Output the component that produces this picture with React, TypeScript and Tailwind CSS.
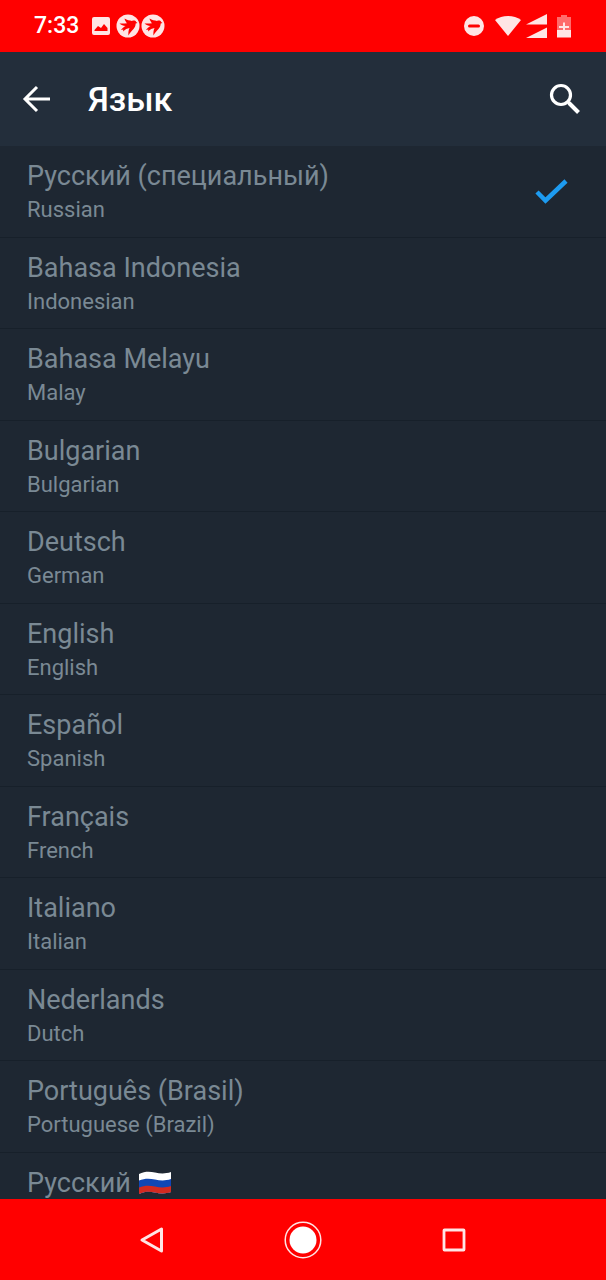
import React, { useState } from 'react';

const languages = [
  { id: 'ru-custom', name: 'Русский (специальный)', english: 'Russian' },
  { id: 'id', name: 'Bahasa Indonesia', english: 'Indonesian' },
  { id: 'ms', name: 'Bahasa Melayu', english: 'Malay' },
  { id: 'bg', name: 'Bulgarian', english: 'Bulgarian' },
  { id: 'de', name: 'Deutsch', english: 'German' },
  { id: 'en', name: 'English', english: 'English' },
  { id: 'es', name: 'Español', english: 'Spanish' },
  { id: 'fr', name: 'Français', english: 'French' },
  { id: 'it', name: 'Italiano', english: 'Italian' },
  { id: 'nl', name: 'Nederlands', english: 'Dutch' },
  { id: 'pt-br', name: 'Português (Brasil)', english: 'Portuguese (Brazil)' },
  { id: 'ru', name: 'Русский', english: 'Russian', flag: true },
];

const RussianFlag = () => (
  <svg className="h-6 w-8" viewBox="0 0 32 24" role="img" aria-label="Russia">
    <clipPath id="flag-wave">
      <path d="M0 3C6 0 11 .5 16 1.500S26 3 32 1v20c-6 2-11 1.500-16 .5S6 20 0 23z" />
    </clipPath>
    <g clipPath="url(#flag-wave)">
      <path fill="#fff" d="M0 0h32v24H0z" />
      <path fill="#1147b5" d="M0 9.500C6 7 11 7.500 16 8.500s10 1.500 16-.5v16H0z" />
      <path fill="#d32a20" d="M0 16.500C6 14 11 14.500 16 15.500s10 1.500 16-.5v9H0z" />
    </g>
  </svg>
);

// Round notification badge with a bird cut out of it
const BirdBadge = () => (
  <svg className="size-6" viewBox="0 0 24 24" aria-hidden="true">
    <circle cx="12" cy="12" r="11.500" fill="#ffe5e5" />
    <path
      fill="#f00"
      d="M3.500 9.500c3 .2 5.200 0 7.500-.3C9.800 7.800 9 6.500 8.500 4.500c2.500 1.500 5 2 7.500 2.500 1.800-.8 3.600-.3 4.200 1l1.300 1-1.800.5c-.2 2.500-.9 4-2.200 5.500-2 2-3.500 3.500-5 6.500-.3-2.300-.2-4.500 1-7.500-2.200.3-4.500 1.500-6.500 3.500l.3-2-2.300.5c1.300-1.800 2.700-3 4.500-4-2.200-.2-4.300-1-6-2.500z"
    />
  </svg>
);

const StatusBar = () => (
  <div className="flex h-[52px] shrink-0 items-center bg-[#f00] pr-[35px] pl-[34px] text-[#ffe5e5]">
    <span className="text-[23px] font-medium text-white">7:33</span>
    <div className="ml-3 flex items-center gap-[1px]">
      <svg className="mr-1 size-5" viewBox="0 0 20 20" aria-hidden="true">
        <path
          fill="currentColor"
          fillRule="evenodd"
          d="M3 1h14a2 2 0 0 1 2 2v14a2 2 0 0 1-2 2H3a2 2 0 0 1-2-2V3a2 2 0 0 1 2-2zM3.500 15h13v-3L13 8l-3 4-3-2-3.500 4z"
        />
      </svg>
      <BirdBadge />
      <BirdBadge />
    </div>
    <div className="ml-auto flex items-center">
      <svg className="size-[22px]" viewBox="0 0 22 22" aria-hidden="true">
        <path
          fill="currentColor"
          fillRule="evenodd"
          d="M11 1a10 10 0 1 0 0 20 10 10 0 0 0 0-20zM6.500 9.500a1.500 1.500 0 0 0 0 3h9a1.500 1.500 0 0 0 0-3z"
        />
      </svg>
      <svg className="ml-2.5 h-[22px] w-[26px]" viewBox="0 0 26 22" aria-hidden="true">
        <path fill="currentColor" d="M0 5C7-.5 19-.5 26 5L13 21z" />
      </svg>
      <svg className="ml-1 h-6 w-6" viewBox="0 0 24 24" aria-hidden="true">
        <path fill="currentColor" d="M22 0v10.500H1zM22 13.500V24H1z" />
      </svg>
      <svg className="ml-2 h-6 w-[14px]" viewBox="0 0 14 24" aria-hidden="true">
        <path fill="#ff6b6b" d="M4 1h6v2h4v13H0V3h4z" />
        <path fill="currentColor" d="M0 16h14v7.500H0zM6 8.500h2V12h4v2H8v2H6v-2H2v-2h4z" />
      </svg>
    </div>
  </div>
);

const NavigationBar = () => (
  <nav className="flex h-[81px] shrink-0 items-center justify-center gap-[111px] bg-[#f00] text-[#ffe5e5]">
    <button aria-label="Back" className="flex size-10 items-center justify-center">
      <svg className="size-7" viewBox="0 0 28 28" fill="none" stroke="currentColor" strokeWidth="3" strokeLinejoin="round">
        <path d="M23.500 3v22L4 14z" />
      </svg>
    </button>
    <button aria-label="Home" className="flex size-10 items-center justify-center">
      <svg className="size-10" viewBox="0 0 40 40">
        <circle cx="20" cy="20" r="17.800" fill="none" stroke="currentColor" strokeWidth="1.500" />
        <circle cx="20" cy="20" r="13.500" fill="#fff" />
      </svg>
    </button>
    <button aria-label="Recent apps" className="flex size-10 items-center justify-center">
      <svg className="size-6" viewBox="0 0 24 24" fill="none" stroke="currentColor" strokeWidth="2.800">
        <rect x="2" y="2" width="20" height="20" rx=".5" />
      </svg>
    </button>
  </nav>
);

export default function App() {
  const [selected, setSelected] = useState('ru-custom');

  return (
    <div className="flex h-screen flex-col bg-[#1e2732] font-[Roboto,sans-serif]">
      <StatusBar />

      {/* Header */}
      <header className="flex h-[94px] shrink-0 items-center bg-[#232e3b] pr-[21px] pl-4 text-white">
        <button aria-label="Back" className="flex size-10 items-center justify-center">
          <svg className="h-7 w-8" viewBox="0 0 32 28" fill="none" stroke="currentColor" strokeWidth="3">
            <path d="M30 14H5M17 2 5 14l12 12" />
          </svg>
        </button>
        <h1 className="ml-8 text-[34px] leading-10 font-medium">Язык</h1>
        <button aria-label="Search" className="ml-auto flex size-10 items-center justify-center">
          <svg className="size-8" viewBox="0 0 32 32" fill="none" stroke="currentColor">
            <circle cx="12" cy="12" r="9.500" strokeWidth="3.200" />
            <path d="M18.500 18.500l2 2" strokeWidth="3" />
            <path d="M20 20l9.500 9.500" strokeWidth="4" />
          </svg>
        </button>
      </header>

      {/* Language list */}
      <ul className="min-h-0 flex-1 overflow-hidden">
        {languages.map((lang) => (
          <li key={lang.id} className="border-b border-[#17202a] odd:pb-[1px]">
            <button
              onClick={() => setSelected(lang.id)}
              className="flex w-full items-center justify-between pt-3 pr-9 pb-2.5 pl-[27px] text-left text-[#7a8994]"
            >
              <span className="flex flex-col">
                <span className="flex items-center gap-2 text-[27px] leading-9">
                  {lang.name}
                  {lang.flag && <RussianFlag />}
                </span>
                <span className="text-[22px] leading-8">{lang.english}</span>
              </span>
              {selected === lang.id && (
                <svg className="h-7 w-9" viewBox="0 0 36 28" fill="none" stroke="#1d9bf0" strokeWidth="4.500" aria-label="Selected">
                  <path d="M3 14l8.500 8.500L32 3" />
                </svg>
              )}
            </button>
          </li>
        ))}
      </ul>

      <NavigationBar />
    </div>
  );
}
